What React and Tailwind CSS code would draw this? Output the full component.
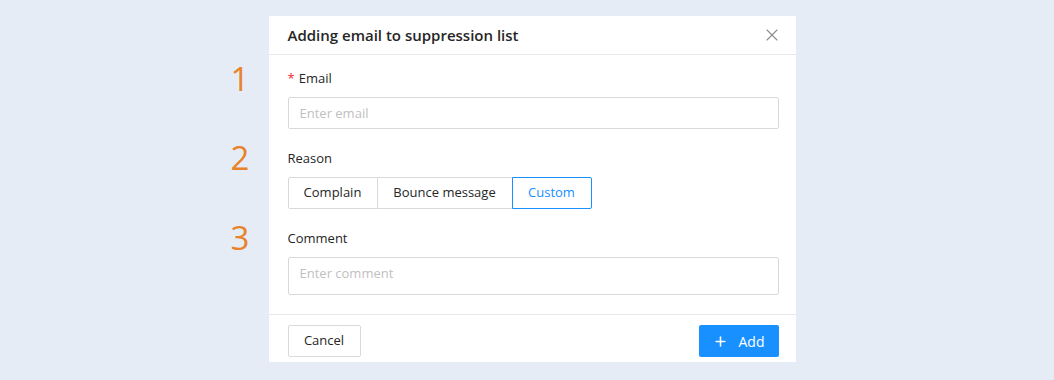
import { Plus, X } from 'lucide-react'

const FONT = { fontFamily: '"Open Sans", "Noto Sans", Arial, sans-serif' }

function Step({ n }) {
  return (
    <span className="absolute -left-[57px] -top-[7px] text-[33px] leading-none font-normal text-[#e8832a]">{n}</span>
  )
}

export default function App() {
  return (
    <div style={FONT} className="w-[1054px] h-[380px] bg-[#e5ecf6] flex justify-center pt-4">
      <div className="w-[527px] h-[346px] bg-white flex flex-col ml-[10px]">
        <div className="h-[39px] pl-[19px] pr-[14px] flex items-center justify-between border-b border-[#e8e8e8]">
          <h2 className="text-[15px] font-semibold text-[#262626]">Adding email to suppression list</h2>
          <X size={20} strokeWidth={1.3} className="text-[#8c8c8c]" />
        </div>

        <div className="pl-[19px] pr-[17px] pt-[14px] flex-1">
          <div className="relative">
            <Step n="1" />
            <label className="flex items-center gap-1 text-[13px] text-[#262626] h-[20px]">
              <span className="text-[#f5222d]">*</span>Email
            </label>
            <input placeholder="Enter email"
              className="mt-[8px] w-full h-[32px] border border-[#d9d9d9] rounded-[2px] px-[11px] text-[13px] outline-none placeholder:text-[#bfbfbf]" />
          </div>

          <div className="relative mt-[19px]">
            <Step n="2" />
            <label className="block text-[13px] text-[#262626] h-[20px] leading-[20px]">Reason</label>
            <div className="mt-[9px] flex h-[32px] text-[13px]">
              <button className="w-[90px] border border-[#d9d9d9] rounded-l-[2px] text-[#262626]">Complain</button>
              <button className="w-[135px] border-y border-r border-[#d9d9d9] text-[#262626]">Bounce message</button>
              <button className="w-[80px] border border-[#1890ff] -ml-px rounded-r-[2px] text-[#1890ff]">Custom</button>
            </div>
          </div>

          <div className="relative mt-[19px]">
            <Step n="3" />
            <label className="block text-[13px] text-[#262626] h-[20px] leading-[20px]">Comment</label>
            <textarea placeholder="Enter comment" rows={1}
              className="mt-[9px] block w-full h-[38px] border border-[#d9d9d9] rounded-[2px] px-[11px] py-[6px] text-[13px] resize-none outline-none placeholder:text-[#bfbfbf]" />
          </div>
        </div>

        <div className="h-[48px] border-t border-[#e8e8e8] pl-[19px] pr-[17px] flex items-start pt-[10px] justify-between">
          <button className="h-[32px] w-[73px] border border-[#d9d9d9] rounded-[2px] text-[13px] text-[#262626]">Cancel</button>
          <button className="h-[32px] w-[80px] bg-[#1890ff] rounded-[2px] text-[14px] text-white flex items-center justify-center gap-[11px]">
            <Plus size={15} strokeWidth={2.5} />Add
          </button>
        </div>
      </div>
    </div>
  )
}
